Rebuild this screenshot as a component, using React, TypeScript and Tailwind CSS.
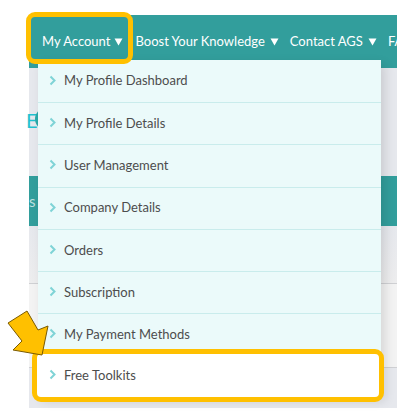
import React from "react";

const items = [
  "My Profile Dashboard",
  "My Profile Details",
  "User Management",
  "Company Details",
  "Orders",
  "Subscription",
  "My Payment Methods",
];

function Chevron() {
  return (
    <svg width="8" height="11" viewBox="0 0 8 11" className="shrink-0 -mt-[2px]">
      <path d="M1.5 1.5 L5.5 5.5 L1.5 9.5" fill="none" stroke="#7fd3d6" strokeWidth="2" />
    </svg>
  );
}

function Tri() {
  return (
    <svg width="9" height="8" viewBox="0 0 9 8" className="shrink-0">
      <path d="M0.5 0.5 L8.5 0.5 L4.5 7.5 Z" fill="#ffffff" />
    </svg>
  );
}

export default function App() {
  const font = { fontFamily: "Lato, 'Noto Sans', sans-serif" };
  return (
    <div className="relative w-[411px] h-[415px] bg-white overflow-hidden" style={font}>
      {/* underlying page screenshot */}
      <div className="ml-[29px] mt-[15px] w-[368px] h-[393px] bg-[#e4e6eb] flex flex-col">
        <div className="h-[53px] bg-[#329e9c] flex items-center pl-[13px] text-white text-[13px] whitespace-nowrap overflow-hidden">
          <div className="flex items-center gap-[4px]">
            <span>My Account</span>
            <Tri />
          </div>
          <div className="flex items-center gap-[5px] ml-[12px]">
            <span>Boost Your Knowledge</span>
            <Tri />
          </div>
          <div className="flex items-center gap-[5px] ml-[11px]">
            <span>Contact AGS</span>
            <Tri />
          </div>
          <div className="flex items-center ml-[11px]">
            <span>FAQ</span>
          </div>
        </div>
        <div className="h-[108px] bg-[#e6e8ed] relative">
          <div className="absolute left-[-3px] top-[42px] text-[#1fc2d0] text-[20px] leading-none">E</div>
          <div className="absolute left-[6px] top-[40px] w-[22px] h-[22px] rounded-full bg-[#2aa9a9]" />
        </div>
        <div className="h-[50px] bg-[#329e9c] text-white/70 text-[15px] flex items-center">s F</div>
        <div className="h-[57px] bg-gradient-to-b from-[#e6e8ed] to-[#ededee]" />
        <div className="h-[84px] bg-[#f3f3f3] border-t border-[#cfd0d3]" />
        <div className="flex-1 bg-[#e6e8ed] border-t border-[#cfd0d3]" />
      </div>

      {/* dropdown menu */}
      <div className="absolute left-[38px] top-[60px] w-[343px] bg-[#ebfafa] shadow-[4px_4px_10px_rgba(0,0,0,0.12)] flex flex-col">
        {items.map((t, i) => (
          <div
            key={t}
            className={`h-[42.2px] flex items-center gap-[7px] pl-[11px] text-[13px] text-[#4d4d4d] ${i > 0 ? "border-t border-[#c9ecec]" : ""}`}
          >
            <Chevron />
            <span>{t}</span>
          </div>
        ))}
        <div className="h-[42px] flex items-center gap-[7px] pl-[11px] text-[13px] text-[#4d4d4d] bg-white">
          <Chevron />
          <span>Free Toolkits</span>
        </div>
      </div>

      {/* highlight boxes */}
      <div className="absolute left-[26px] top-[12px] w-[107px] h-[52px] border-[5px] border-[#ffc000] rounded-[9px]" />
      <div className="absolute left-[32px] top-[349px] w-[352px] h-[53px] border-[5px] border-[#ffc000] rounded-[9px] bg-white flex items-center gap-[7px] pl-[12px] text-[13px] text-[#4d4d4d]">
        <Chevron />
        <span>Free Toolkits</span>
      </div>

      {/* arrow */}
      <svg className="absolute left-0 top-[300px]" width="60" height="60" viewBox="0 0 60 60">
        <path
          d="M8 23 L27 11 L38 30 L48 26 L42 55 L13 50 L22 41 Z"
          fill="#ffc000"
          stroke="#7a5a00"
          strokeWidth="1"
          strokeLinejoin="miter"
        />
      </svg>
    </div>
  );
}
